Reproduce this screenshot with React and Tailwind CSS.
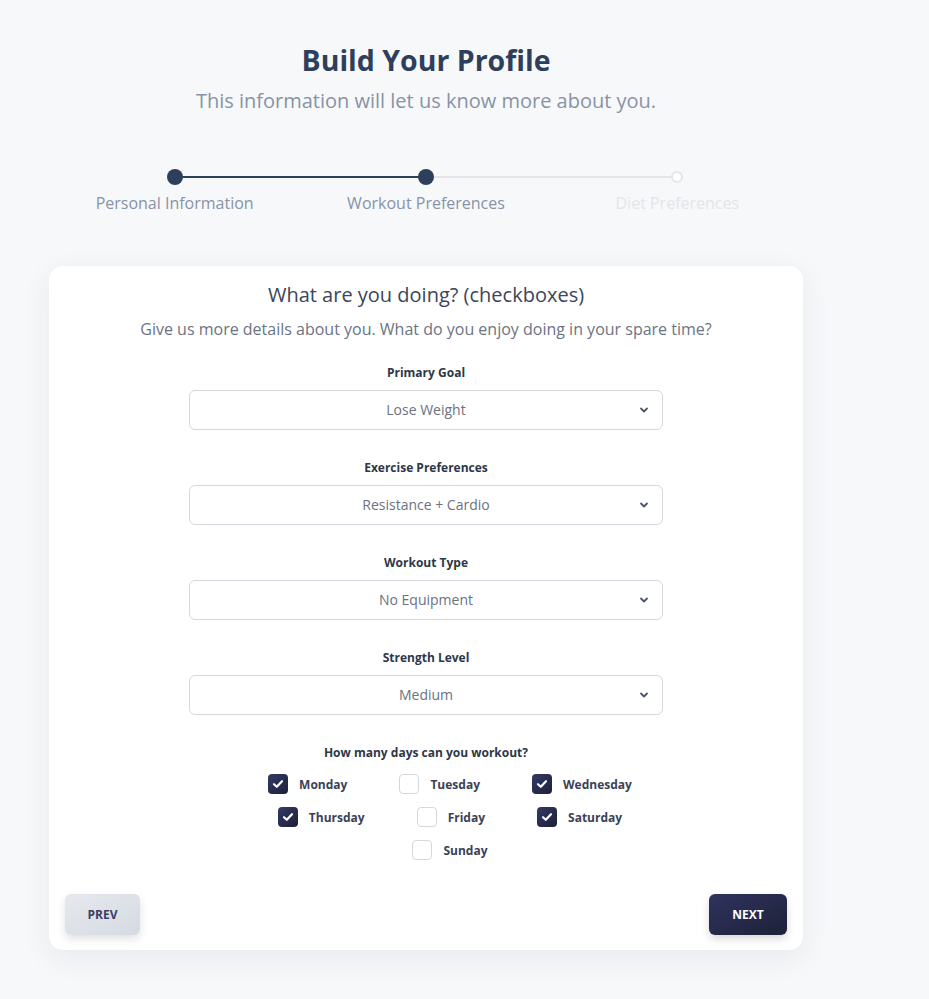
import React from "react";

const font = { fontFamily: '"Open Sans", "Noto Sans", sans-serif' };

function Chevron() {
  return (
    <svg width="10" height="10" viewBox="0 0 10 10" className="absolute right-[13px] top-1/2 -translate-y-1/2">
      <path d="M2 3.5 L5 6.5 L8 3.5" fill="none" stroke="#4a5568" strokeWidth="1.8" strokeLinecap="round" strokeLinejoin="round" />
    </svg>
  );
}

function Field({ label, value, first }) {
  return (
    <div className={`flex flex-col items-center ${first ? "mt-[23px]" : "mt-[29px]"}`}>
      <div className="text-[12px] leading-[16px] pt-[1px] font-bold text-[#2d3748]">{label}</div>
      <div className="relative mt-[9px] w-[474px] h-[40px] rounded-[6px] border border-[#d4d7dd] bg-white flex items-center justify-center">
        <span className="text-[14px] leading-[20px] -mt-[1px] text-[#6b7280]">{value}</span>
        <Chevron />
      </div>
    </div>
  );
}

function Day({ label, checked }) {
  return (
    <div className="flex items-center gap-[11px]">
      {checked ? (
        <div className="w-[20px] h-[20px] rounded-[4px] bg-gradient-to-br from-[#343a66] to-[#1d2038] flex items-center justify-center">
          <svg width="14" height="14" viewBox="0 0 14 14">
            <path d="M3 7.2 L5.8 9.8 L11 4.2" fill="none" stroke="white" strokeWidth="2.2" strokeLinecap="round" strokeLinejoin="round" />
          </svg>
        </div>
      ) : (
        <div className="w-[20px] h-[20px] rounded-[4px] border border-[#d4d7dd] bg-white" />
      )}
      <span className="text-[12px] leading-[16px] mt-[1px] font-bold text-[#3a4256]">{label}</span>
    </div>
  );
}

export default function App() {
  return (
    <div style={font} className="min-h-[999px] bg-[#f7f8fa]">
      <div className="ml-[49px] w-[754px] pt-[38px] flex flex-col items-center">
        <h1 className="text-[28.5px] leading-[44px] font-bold text-[#2e3f5c]">Build Your Profile</h1>
        <p className="mt-[5px] text-[20px] leading-[28px] text-[#8893a5]">This information will let us know more about you.</p>

        <div className="mt-[54px] w-full grid grid-cols-3">
          {[
            { label: "Personal Information", state: "done" },
            { label: "Workout Preferences", state: "done" },
            { label: "Diet Preferences", state: "todo" },
          ].map((s, i) => (
            <div key={i} className="flex flex-col items-center relative">
              <div className="relative w-full h-[16px] flex items-center justify-center">
                {i > 0 && (
                  <div className={`absolute left-0 right-1/2 top-[7px] h-[2px] ${i === 1 ? "bg-[#2e3f5c]" : "bg-[#e3e5e9]"}`} />
                )}
                {i < 2 && (
                  <div className={`absolute left-1/2 right-0 top-[7px] h-[2px] ${i === 0 ? "bg-[#2e3f5c]" : "bg-[#e3e5e9]"}`} />
                )}
                {s.state === "done" ? (
                  <div className="relative w-[16px] h-[16px] rounded-full bg-[#2e3f5c]" />
                ) : (
                  <div className="relative w-[12px] h-[12px] rounded-full bg-white border-2 border-[#e3e5e9]" />
                )}
              </div>
              <div className={`mt-[6px] text-[16px] leading-[24px] ${s.state === "done" ? "text-[#8893a5]" : "text-[#e3e5ea]"}`}>{s.label}</div>
            </div>
          ))}
        </div>

        <div className="mt-[51px] w-full bg-white rounded-[14px] shadow-[0_8px_30px_rgba(30,40,60,0.07)] px-[16px] pt-[15px] pb-[15px] flex flex-col items-center">
          <h2 className="text-[20px] leading-[28px] text-[#3b4659]">What are you doing? (checkboxes)</h2>
          <p className="mt-[8px] text-[16px] leading-[24px] text-[#6b7483]">Give us more details about you. What do you enjoy doing in your spare time?</p>

          <Field label="Primary Goal" value="Lose Weight" first />
          <Field label="Exercise Preferences" value="Resistance + Cardio" />
          <Field label="Workout Type" value="No Equipment" />
          <Field label="Strength Level" value="Medium" />

          <div className="mt-[29px] pt-[1px] text-[12px] leading-[16px] font-bold text-[#2d3748]">How many days can you workout?</div>
          <div className="mt-[13px] w-[468px] pl-[48px]">
            <div className="flex flex-wrap justify-center gap-x-[52px] gap-y-[13px]">
              <Day label="Monday" checked />
              <Day label="Tuesday" />
              <Day label="Wednesday" checked />
              <Day label="Thursday" checked />
              <Day label="Friday" />
              <Day label="Saturday" checked />
              <Day label="Sunday" />
            </div>
          </div>

          <div className="mt-[34px] w-full flex justify-between">
            <button className="w-[75px] h-[41px] rounded-[6px] bg-gradient-to-br from-[#e6e9ee] to-[#d5dae2] shadow-[0_4px_8px_rgba(0,0,0,0.12)] text-[12px] font-bold text-[#3a3f63]">PREV</button>
            <button className="w-[78px] h-[41px] rounded-[6px] bg-gradient-to-br from-[#2f3360] to-[#1e2138] shadow-[0_4px_8px_rgba(0,0,0,0.15)] text-[12px] font-bold text-white">NEXT</button>
          </div>
        </div>
      </div>
    </div>
  );
}
